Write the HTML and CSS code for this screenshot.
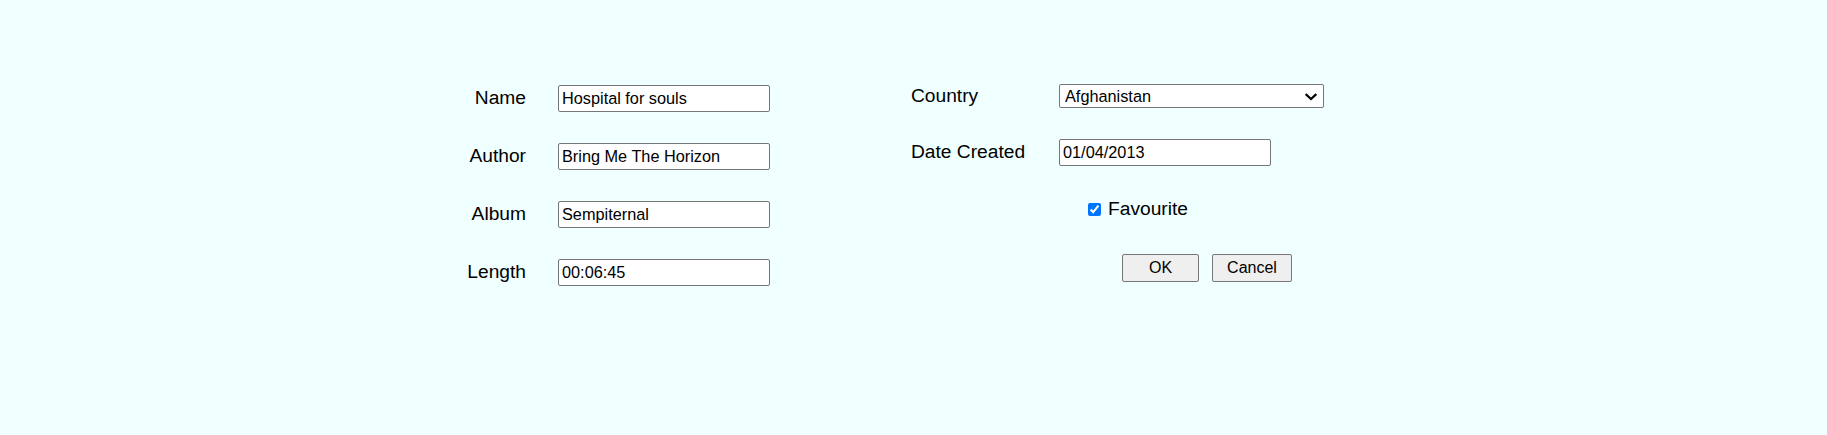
FILE: index.html
```html
<!DOCTYPE html>
<html lang="en">
<head>
<meta charset="utf-8">
<title>Song</title>
<link rel="stylesheet" href="styles.css">
</head>
<body>
<form class="song-form">
  <div class="col col-left">
    <label class="lbl" for="name">Name</label>
    <input class="field" id="name" type="text" value="Hospital for souls">
    <label class="lbl" for="author">Author</label>
    <input class="field" id="author" type="text" value="Bring Me The Horizon">
    <label class="lbl" for="album">Album</label>
    <input class="field" id="album" type="text" value="Sempiternal">
    <label class="lbl" for="length">Length</label>
    <input class="field" id="length" type="text" value="00:06:45">
  </div>
  <div class="col col-right">
    <label class="lbl lbl-left" for="country">Country</label>
    <div class="select-wrap">
      <select class="select" id="country">
        <option selected>Afghanistan</option>
        <option>Albania</option>
        <option>Algeria</option>
      </select>
      <svg class="chevron" width="12" height="8" viewBox="0 0 12 8" aria-hidden="true">
        <path d="M1.5 1.8 L6 6 L10.5 1.8" fill="none" stroke="#000" stroke-width="2.2" stroke-linecap="square" stroke-linejoin="miter"/>
      </svg>
    </div>
    <label class="lbl lbl-left" for="date">Date Created</label>
    <input class="field" id="date" type="text" value="01/04/2013">
    <span class="spacer"></span>
    <label class="check">
      <input class="checkbox" type="checkbox" checked>Favourite
    </label>
    <span class="spacer"></span>
    <div class="actions">
      <button class="btn btn-ok" type="button">OK</button>
      <button class="btn btn-cancel" type="button">Cancel</button>
    </div>
  </div>
</form>
</body>
</html>
```
FILE: styles.css
```css
html, body {
  margin: 0;
  padding: 0;
}

body {
  background: #f0ffff;
  font-family: "Liberation Sans", Arial, sans-serif;
  color: #000;
  min-height: 435px;
}

.song-form {
  display: flex;
  align-items: flex-start;
  padding: 85px 0 0 460px;
}

.col {
  display: grid;
  row-gap: 31px;
  align-items: baseline;
}

.col-left {
  grid-template-columns: 66px 212px;
  column-gap: 32px;
}

.col-right {
  margin-left: 141px;
  margin-top: -1px;
  grid-template-columns: 148px auto;
}

.lbl {
  font-size: 19.2px;
  text-align: right;
  white-space: nowrap;
}

.lbl-left {
  text-align: left;
}

.field {
  box-sizing: border-box;
  width: 212px;
  height: 27px;
  margin: 0;
  padding: 0 3px;
  border: 1px solid #767676;
  border-radius: 2px;
  background: #fff;
  font-family: "Liberation Sans", Arial, sans-serif;
  font-size: 16.3px;
  color: #000;
}

.select-wrap {
  position: relative;
  width: 265px;
}

.select {
  -webkit-appearance: none;
  appearance: none;
  box-sizing: border-box;
  display: block;
  width: 265px;
  height: 24px;
  margin: 0;
  padding: 0 24px 0 5px;
  border: 1px solid #767676;
  border-radius: 2px;
  background-color: #fff;
  font-family: "Liberation Sans", Arial, sans-serif;
  font-size: 16.3px;
  color: #000;
}

.chevron {
  position: absolute;
  right: 7px;
  top: 9px;
  pointer-events: none;
}

.check {
  display: flex;
  align-items: center;
  padding-left: 29px;
  margin-top: 1px;
  font-size: 19.2px;
}

.checkbox {
  width: 13px;
  height: 13px;
  margin: 1px 7px 0 0;
  accent-color: #0075ff;
}

.actions {
  display: flex;
  gap: 13px;
  padding-left: 63px;
  margin-top: 3px;
}

.btn {
  box-sizing: border-box;
  height: 28px;
  padding: 0;
  margin: 0;
  border: 1px solid #767676;
  border-radius: 2px;
  background: #efefef;
  font-family: "Liberation Sans", Arial, sans-serif;
  font-size: 16px;
  color: #000;
}

.btn-ok {
  width: 77px;
}

.btn-cancel {
  width: 80px;
}
```
